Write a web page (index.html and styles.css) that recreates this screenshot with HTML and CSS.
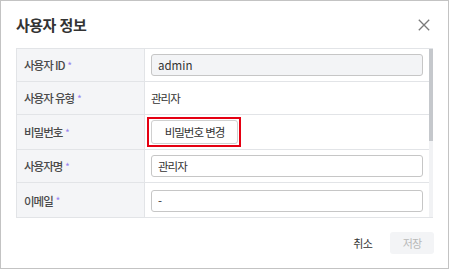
FILE: index.html
```html
<!DOCTYPE html>
<html lang="ko">
<head>
    <meta charset="UTF-8">
    <meta name="viewport" content="width=device-width, initial-scale=1.0">
    <title>사용자 정보</title>
    <link rel="stylesheet" href="styles.css">
</head>
<body>

<div class="dialog">
    <div class="dialog-header">
        <h2>사용자 정보</h2>
        <button class="close" aria-label="닫기">
            <svg width="12" height="12" viewBox="0 0 12 12">
                <path d="M0.8 0.8 L11.2 11.2 M11.2 0.8 L0.8 11.2" stroke="#7a7a7a" stroke-width="1.3" fill="none"/>
            </svg>
        </button>
    </div>

    <div class="form-table">
        <div class="form-body">
            <div class="row">
                <div class="label">사용자 ID<span class="req">*</span></div>
                <div class="value"><input type="text" value="admin" disabled></div>
            </div>
            <div class="row">
                <div class="label">사용자 유형<span class="req">*</span></div>
                <div class="value ko">관리자</div>
            </div>
            <div class="row row-btn">
                <div class="label">비밀번호<span class="req">*</span></div>
                <div class="value"><button class="btn-outline highlight">비밀번호 변경</button></div>
            </div>
            <div class="row">
                <div class="label">사용자명<span class="req">*</span></div>
                <div class="value"><input type="text" class="ko" value="관리자"></div>
            </div>
            <div class="row row-last">
                <div class="label">이메일<span class="req">*</span></div>
                <div class="value"><input type="text" value="-"></div>
            </div>
        </div>
        <div class="scrollbar"><div class="thumb"></div></div>
    </div>

    <div class="dialog-footer">
        <button class="btn-text">취소</button>
        <button class="btn-save" disabled>저장</button>
    </div>
</div>

</body>
</html>
```

FILE: styles.css
```css
body {
    margin: 0;
    font-family: "Noto Sans CJK KR", "Noto Sans", sans-serif;
    background-color: #fff;
    color: #333;
}
.dialog {
    width: 449px;
    height: 269px;
    box-sizing: border-box;
    border: 1px solid #c3c3c3;
    background-color: #fff;
    display: flex;
    flex-direction: column;
}
.dialog-header {
    height: 47px;
    flex-shrink: 0;
    display: flex;
    align-items: center;
    justify-content: space-between;
    padding: 0 18px 0 15px;
}
.dialog-header h2 {
    margin: 0;
    font-size: 15px;
    font-weight: 700;
    letter-spacing: -0.5px;
    color: #333;
}
.close {
    border: none;
    background: none;
    padding: 0;
    width: 12px;
    height: 12px;
    display: flex;
    cursor: pointer;
}
.form-table {
    margin: 0 15px;
    height: 170px;
    box-sizing: border-box;
    border: 1px solid #e2e4e7;
    border-right: none;
    flex-shrink: 0;
    display: flex;
}
.form-body {
    flex: 1;
    overflow: hidden;
}
.scrollbar {
    width: 4px;
    background-color: #f1f2f4;
}
.thumb {
    height: 92px;
    background-color: #c5c8cc;
}
.row {
    display: flex;
    height: 33px;
    box-sizing: border-box;
    border-bottom: 1px solid #e2e4e7;
}
.row-btn {
    height: 35px;
}
.row-last {
    height: 36px;
}
.label {
    width: 128px;
    flex-shrink: 0;
    box-sizing: border-box;
    padding-left: 7px;
    background-color: #f4f5f7;
    border-right: 1px solid #e2e4e7;
    display: flex;
    align-items: center;
    font-size: 11.5px;
    font-weight: 500;
    letter-spacing: -1px;
    color: #4a4a4a;
}
.req {
    color: #9a86f0;
    font-size: 9px;
    margin-left: 3px;
}
.value {
    flex: 1;
    display: flex;
    align-items: center;
    padding: 0 6px;
    font-size: 11.5px;
    color: #333;
}
.ko {
    letter-spacing: -1px;
}
.value input {
    width: 100%;
    height: 22px;
    box-sizing: border-box;
    border: 1px solid #c6c6c6;
    border-radius: 3px;
    padding: 0 6px;
    font-family: inherit;
    font-size: 11.5px;
    color: #333;
    background-color: #fff;
}
.value input:disabled {
    background-color: #f3f4f6;
    color: #333;
}
.btn-outline {
    position: relative;
    height: 24px;
    width: 87px;
    padding: 0;
    border: 1px solid #d0d0d0;
    border-radius: 3px;
    background-color: #fff;
    font-family: inherit;
    font-size: 11.5px;
    letter-spacing: -1px;
    color: #333;
    cursor: pointer;
}
.highlight::after {
    content: "";
    position: absolute;
    top: -4px;
    bottom: -4px;
    left: -5px;
    right: -4px;
    border: 2px solid #e50012;
}
.dialog-footer {
    flex: 1;
    display: flex;
    align-items: center;
    justify-content: flex-end;
    gap: 8px;
    padding: 0 14px;
}
.btn-text {
    border: none;
    background: none;
    height: 22px;
    padding: 0 10px;
    font-family: inherit;
    font-size: 11px;
    letter-spacing: -0.8px;
    color: #333;
    cursor: pointer;
}
.btn-save {
    border: none;
    border-radius: 3px;
    height: 22px;
    width: 44px;
    background-color: #f3f4f6;
    font-family: inherit;
    font-size: 11px;
    letter-spacing: -0.8px;
    color: #b8b8b8;
}
```
